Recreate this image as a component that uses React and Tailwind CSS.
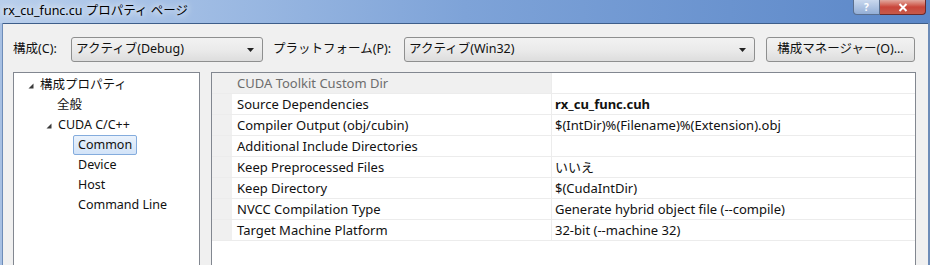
import { useState } from 'react'

const font = { fontFamily: '"Noto Sans", "Noto Sans CJK JP", sans-serif' }

const rows = [
  { name: 'Source Dependencies', value: 'rx_cu_func.cuh', bold: true },
  { name: 'Compiler Output (obj/cubin)', value: '$(IntDir)%(Filename)%(Extension).obj' },
  { name: 'Additional Include Directories', value: '' },
  { name: 'Keep Preprocessed Files', value: 'いいえ' },
  { name: 'Keep Directory', value: '$(CudaIntDir)' },
  { name: 'NVCC Compilation Type', value: 'Generate hybrid object file (--compile)' },
  { name: 'Target Machine Platform', value: '32-bit (--machine 32)' },
]

function Expander() {
  return (
    <svg width="6" height="6" viewBox="0 0 6 6" className="shrink-0">
      <polygon points="5.5,0.5 5.5,5.5 0.5,5.5" fill="#3b3b3b" />
    </svg>
  )
}

function Combo({ text, width }) {
  return (
    <div
      className={`h-[25px] ${width} flex items-center justify-between pl-[4px] pr-[8px] rounded-[3px] border border-[#8e8f8f] bg-gradient-to-b from-[#f2f2f2] via-[#ebebeb] to-[#dddddd] text-[12.5px] text-[#111]`}
    >
      <span>{text}</span>
      <svg width="7" height="4" viewBox="0 0 7 4">
        <polygon points="0,0 7,0 3.5,4" fill="#222" />
      </svg>
    </div>
  )
}

export default function App() {
  const [selected, setSelected] = useState('Common')

  return (
    <div className="w-[930px] h-[265px] overflow-hidden bg-[#f0f0f0] flex flex-col" style={font}>
      {/* title bar */}
      <div className="h-[23px] shrink-0 flex items-start justify-between bg-gradient-to-r from-[#b9cfec] via-[#7ea3d8] to-[#5b87c8]">
        <span className="pl-[3px] pt-[3px] text-[12.5px] leading-[16px] text-black [text-shadow:0_0_6px_#fff,0_0_10px_#fff]">
          rx_cu_func.cu プロパティ ページ
        </span>
        <div className="flex mr-[4px]">
          <div className="w-[27px] h-[15px] flex items-center justify-center rounded-bl-[4px] border border-[#5a6f8f] border-t-0 bg-gradient-to-b from-[#c9d8ee] to-[#93aed6] text-[10px] font-bold leading-none text-white">
            ?
          </div>
          <div className="w-[46px] h-[15px] flex items-center justify-center rounded-br-[4px] border border-l-0 border-t-0 border-[#6b2a2a] bg-gradient-to-b from-[#e0a89f] via-[#c9453a] to-[#c75a4a]">
            <svg width="10" height="9" viewBox="0 0 10 9">
              <path d="M1.5 1 L8.5 8 M8.5 1 L1.5 8" stroke="#fff" strokeWidth="2" />
            </svg>
          </div>
        </div>
      </div>

      <div className="flex flex-1 min-h-0">
        <div className="w-[3px] bg-[#a7c0e3] border-r border-[#6d8cb8]" />
        <div className="flex-1 flex flex-col border-t border-[#3e5e8a] bg-[#f0f0f0]">
          <div className="h-px bg-white" />
          {/* toolbar row */}
          <div className="flex items-center mt-[13px] pl-[10px] text-[12.5px] text-[#111]">
            <span className="w-[58px]">構成(C):</span>
            <Combo text="アクティブ(Debug)" width="w-[192px]" />
            <span className="ml-[10px] w-[131px]">プラットフォーム(P):</span>
            <Combo text="アクティブ(Win32)" width="w-[351px]" />
            <button className="ml-[11px] w-[149px] h-[25px] rounded-[3px] border border-[#8e8f8f] bg-gradient-to-b from-[#f2f2f2] via-[#ebebeb] to-[#dddddd] text-[12.5px] text-[#111]">
              構成マネージャー(O)...
            </button>
          </div>

          {/* panels */}
          <div className="flex mt-[10px] pl-[10px] gap-[11px] flex-1">
            {/* tree */}
            <div className="w-[187px] h-[220px] shrink-0 border border-[#828790] bg-white pt-[2px] text-[12.5px] text-[#111]">
              <div className="h-[20px] flex items-center pt-[1px] pl-[14px] gap-[6px]">
                <Expander />
                <span>構成プロパティ</span>
              </div>
              <div className="h-[20px] flex items-center pt-[1px] pl-[43px]">全般</div>
              <div className="h-[20px] flex items-center pt-[1px] pl-[32px] gap-[6px]">
                <Expander />
                <span>CUDA C/C++</span>
              </div>
              {['Common', 'Device', 'Host', 'Command Line'].map(item => (
                <div key={item} className="h-[20px] flex items-center pl-[64px]">
                  <span
                    onClick={() => setSelected(item)}
                    className={
                      item === selected
                        ? 'h-[20px] flex items-center pt-[1px] px-[4px] -ml-[5px] rounded-[2px] border border-[#84acdd] bg-gradient-to-b from-[#eaf2fc] to-[#d2e3f8]'
                        : 'pt-[1px] px-[4px] -ml-[4px]'
                    }
                  >
                    {item}
                  </span>
                </div>
              ))}
            </div>

            {/* property grid */}
            <div className="w-[705px] h-[220px] shrink-0 border border-[#828790] bg-white text-[13px] text-[#111]">
              <div className="flex h-[21px] border-b border-[#ececec]">
                <div className="w-[339px] bg-[#f0f0f0] flex items-center pt-[1px] pl-[25px] text-[#6d6d6d]">
                  CUDA Toolkit Custom Dir
                </div>
                <div className="flex-1 border-l border-[#ececec]" />
              </div>
              {rows.map(r => (
                <div key={r.name} className="flex h-[21px] border-b border-[#ececec]">
                  <div className="w-[20px] bg-[#f0f0f0]" />
                  <div className="w-[319px] flex items-center pt-[1px] pl-[5px]">{r.name}</div>
                  <div className={`flex-1 flex items-center pt-[1px] pl-[3px] border-l border-[#ececec] ${r.bold ? 'font-bold' : ''}`}>
                    {r.value}
                  </div>
                </div>
              ))}
            </div>
          </div>
        </div>
        <div className="w-[2px] bg-[#6d8cb8]" />
      </div>
    </div>
  )
}
